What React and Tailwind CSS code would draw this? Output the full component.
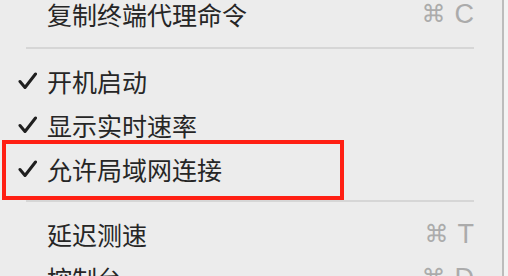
import React from "react";

const cjk = { fontFamily: '"Noto Sans CJK SC", "Noto Sans", sans-serif' };
const keyFont = { fontFamily: '"Liberation Sans", "DejaVu Sans", sans-serif' };

function Check() {
  return (
    <svg width="19" height="18" viewBox="0 0 19 18" className="shrink-0">
      <path d="M2 9.5 L7 15.5 L17.5 2" fill="none" stroke="#1f1f1f" strokeWidth="3" strokeLinecap="round" strokeLinejoin="round" />
    </svg>
  );
}

function Item({ label, checked, shortcut }) {
  return (
    <div className="flex h-[44px] items-center pr-[28px]">
      <div className="flex w-[47px] items-center pl-[18px]">{checked && <Check />}</div>
      <span className="flex-1 text-[25px] leading-none text-[#262626]" style={cjk}>
        {label}
      </span>
      {shortcut && (
        <span className="flex items-center gap-[9px] text-[27px] leading-none text-[#ababab]" style={keyFont}>
          <span className="text-[24px]">⌘</span>
          <span>{shortcut}</span>
        </span>
      )}
    </div>
  );
}

function Separator({ className }) {
  return (
    <div className={`flex items-start pl-[26px] pr-[28px] ${className}`}>
      <div className="h-[2px] w-full bg-[#d6d6d6]" />
    </div>
  );
}

export default function App() {
  return (
    <div className="relative flex h-[276px] w-[508px] overflow-hidden bg-[#ececec]">
      <div className="w-[502px] -mt-[8px]">
        <Item label="复制终端代理命令" shortcut="C" />
        <Separator className="h-[23px] pt-[11px]" />
        <Item label="开机启动" checked />
        <Item label="显示实时速率" checked />
        <Item label="允许局域网连接" checked />
        <Separator className="h-[21px] pt-[9px]" />
        <Item label="延迟测速" shortcut="T" />
        <Item label="控制台" shortcut="D" />
      </div>
      <div className="w-[1.5px] bg-[#bcbcbc]" />
      <div className="flex-1 bg-[#f3f3f3]" />

      {/* annotation box */}
      <div className="absolute left-[2px] top-[140px] h-[60px] w-[342px] border-[4px] border-[#ff1f14]" />
    </div>
  );
}
